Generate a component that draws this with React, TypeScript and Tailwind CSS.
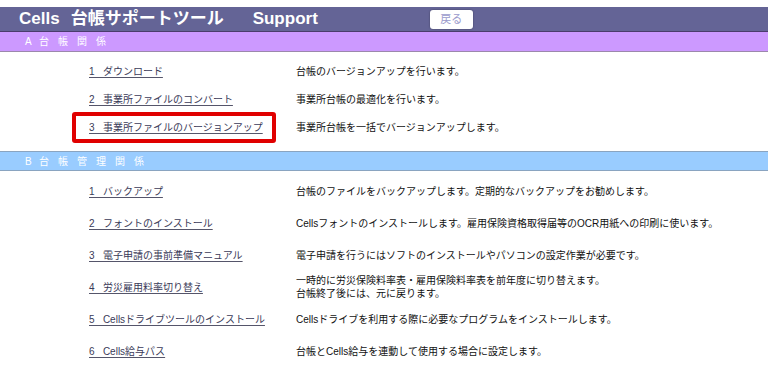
import React from 'react';

type Row = { num: string; label: string; desc: string[]; boxed?: boolean };

const sectionA: Row[] = [
  { num: '1', label: 'ダウンロード', desc: ['台帳のバージョンアップを行います。'] },
  { num: '2', label: '事業所ファイルのコンバート', desc: ['事業所台帳の最適化を行います。'] },
  { num: '3', label: '事業所ファイルのバージョンアップ', desc: ['事業所台帳を一括でバージョンアップします。'], boxed: true },
];

const sectionB: Row[] = [
  { num: '1', label: 'バックアップ', desc: ['台帳のファイルをバックアップします。定期的なバックアップをお勧めします。'] },
  { num: '2', label: 'フォントのインストール', desc: ['Cellsフォントのインストールします。雇用保険資格取得届等のOCR用紙への印刷に使います。'] },
  { num: '3', label: '電子申請の事前準備マニュアル', desc: ['電子申請を行うにはソフトのインストールやパソコンの設定作業が必要です。'] },
  { num: '4', label: '労災雇用料率切り替え', desc: ['一時的に労災保険料率表・雇用保険料率表を前年度に切り替えます。', '台帳終了後には、元に戻ります。'] },
  { num: '5', label: 'Cellsドライブツールのインストール', desc: ['Cellsドライブを利用する際に必要なプログラムをインストールします。'] },
  { num: '6', label: 'Cells給与パス', desc: ['台帳とCells給与を連動して使用する場合に設定します。'] },
];

function MenuRow({ row, h }: { row: Row; h: string }) {
  return (
    <div className={`flex items-center ${h}`}>
      <div className="w-[207px] pl-[89px] box-content shrink-0">
        <span className="relative inline-block whitespace-nowrap">
          {row.boxed && (
            <span className="absolute -left-[17px] -right-[13px] -top-[8px] -bottom-[8px] border-[4px] border-[#e00000] rounded-[3px]" />
          )}
          <a href="#" className="text-[#3a3a58] underline underline-offset-2 decoration-[#55556a]">
            {row.num + '\u00a0\u00a0\u00a0' + row.label}
          </a>
        </span>
      </div>
      <div className="text-[#111] leading-[13px]">
        {row.desc.map((d) => (
          <div key={d} className="whitespace-nowrap">{d}</div>
        ))}
      </div>
    </div>
  );
}

function SectionBar({ letter, title, color }: { letter: string; title: string; color: string }) {
  return (
    <div className={`h-[20px] flex items-center pl-[25px] text-white text-[10px] ${color}`}>
      <span className="w-[14px]">{letter}</span>
      <span className="tracking-[9px]">{title}</span>
    </div>
  );
}

export default function App() {
  return (
    <div
      className="w-[768px] h-[388px] bg-white pt-[7px] overflow-hidden text-[10px]"
      style={{ fontFamily: '"Liberation Sans", "Noto Sans CJK JP", sans-serif' }}
    >
      {/* Title bar */}
      <div className="h-[25px] bg-[#646496] border-b border-[#4a3c6c] flex items-center text-white">
        <span className="pl-[19px] text-[17px] font-semibold">Cells</span>
        <span className="pl-[11px] text-[17px] font-semibold">台帳サポートツール</span>
        <span className="pl-[29px] text-[17px] font-semibold">Support</span>
        <button className="ml-[112px] w-[43px] h-[19px] bg-white rounded-[3px] shadow-[0_0_2px_rgba(0,0,0,0.4)] text-[11px] text-[#9a9acc]">
          戻る
        </button>
      </div>

      {/* Section A */}
      <SectionBar letter="A" title="台帳関係" color="bg-[#cc99ff] border-b border-[#9c88ac]" />
      <div className="pt-[5px] pb-[10px]">
        {sectionA.map((r) => (
          <MenuRow key={r.label} row={r} h="h-[28px]" />
        ))}
      </div>

      {/* Section B */}
      <SectionBar letter="B" title="台帳管理関係" color="bg-[#99ccff] border-t border-b border-[#8aa4c0]" />
      <div className="pt-[4px]">
        {sectionB.map((r) => (
          <MenuRow key={r.label} row={r} h="h-[32px]" />
        ))}
      </div>
    </div>
  );
}
